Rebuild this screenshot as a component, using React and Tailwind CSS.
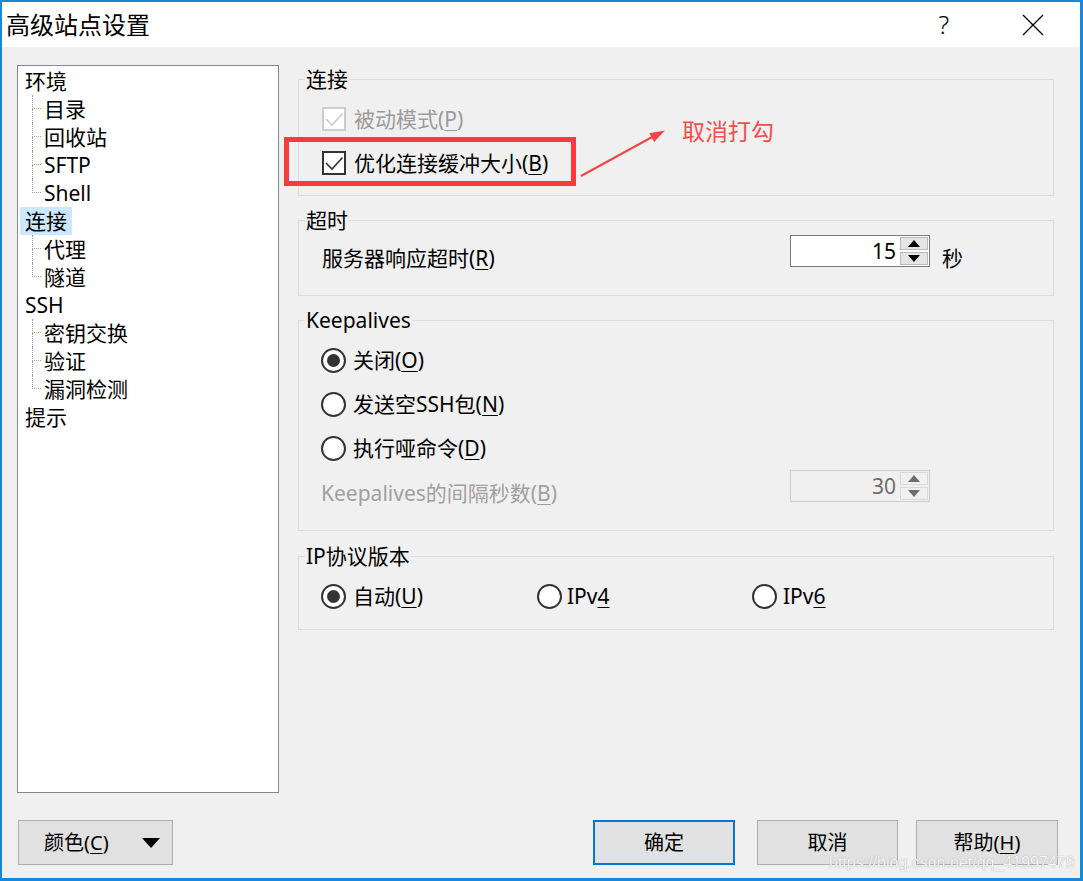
import React from 'react';

const Mn = ({ children }) => (
  <span className="underline underline-offset-[3px] decoration-1">{children}</span>
);

const Checkbox = ({ disabled }) => (
  <span
    className={`w-[24px] h-[24px] border-2 bg-white flex items-center justify-center shrink-0 ${
      disabled ? 'border-[#cccccc]' : 'border-[#333333]'
    }`}
  >
    <svg width="20" height="20" viewBox="0 0 20 20">
      <path
        d="M2 10 L8 16 L18.5 4.5"
        fill="none"
        stroke={disabled ? '#cccccc' : '#333333'}
        strokeWidth="1.6"
      />
    </svg>
  </span>
);

const Radio = ({ checked }) => (
  <span className="w-[25px] h-[25px] rounded-full border-2 border-[#333333] bg-white flex items-center justify-center shrink-0">
    {checked && <span className="w-[13px] h-[13px] rounded-full bg-[#333333]" />}
  </span>
);

const Arrow = ({ up, color }) => (
  <svg width="12" height="7" viewBox="0 0 12 7">
    <path d={up ? 'M0 7 L6 0 L12 7 Z' : 'M0 0 L6 7 L12 0 Z'} fill={color} />
  </svg>
);

const SpinBox = ({ value, disabled }) => (
  <div
    className={`w-[140px] h-[32px] border flex items-center shrink-0 ${
      disabled ? 'border-[#cccccc] bg-[#f0f0f0] text-[#6d6d6d]' : 'border-[#7a7a7a] bg-white text-black'
    }`}
  >
    <span className="flex-1 text-right pr-[4px] text-[21px] leading-[21px]">{value}</span>
    <div className="w-[28px] h-full flex flex-col justify-center gap-[2px] mr-[1px]">
      <div
        className={`h-[13px] border flex items-center justify-center ${
          disabled ? 'border-[#d9d9d9] bg-[#f0f0f0]' : 'border-[#b9b9b9] bg-[#e5e5e5]'
        }`}
      >
        <Arrow up color={disabled ? '#6d6d6d' : '#000'} />
      </div>
      <div
        className={`h-[13px] border flex items-center justify-center ${
          disabled ? 'border-[#d9d9d9] bg-[#f0f0f0]' : 'border-[#b9b9b9] bg-[#e5e5e5]'
        }`}
      >
        <Arrow color={disabled ? '#6d6d6d' : '#000'} />
      </div>
    </div>
  </div>
);

const Group = ({ title, className, children }) => (
  <fieldset className={`border border-[#dcdcdc] ${className}`}>
    <legend className="ml-[6px] px-[1px] h-[20px] leading-[20px] text-[21px] text-black">{title}</legend>
    {children}
  </fieldset>
);

const RootItem = ({ label, selected }) => (
  <div className="h-[28px] flex items-center">
    <span
      className={`ml-[2px] px-[5px] h-full flex items-center ${selected ? 'bg-[#cce8ff]' : ''}`}
    >
      {label}
    </span>
  </div>
);

const ChildItem = ({ label, last }) => (
  <div className="h-[28px] flex items-center">
    <div className="ml-[14px] w-[9px] h-full flex flex-col">
      <div className="h-[14px] border-l border-b border-dotted border-[#a0a0a0]" />
      <div className={`h-[14px] ${last ? '' : 'border-l border-dotted border-[#a0a0a0]'}`} />
    </div>
    <span className="ml-[3px]">{label}</span>
  </div>
);

const Button = ({ children, primary, className }) => (
  <div
    className={`h-[45px] bg-[#e1e1e1] flex items-center justify-center text-[20px] ${
      primary ? 'border-2 border-[#0078d7]' : 'border border-[#adadad]'
    } ${className}`}
  >
    {children}
  </div>
);

export default function App() {
  return (
    <div className="relative w-[1083px] h-[881px] border-t-2 border-l-2 border-r-[3px] border-b-[3px] border-[#1a86d9] bg-[#f0f0f0] flex flex-col text-black leading-none font-['Noto_Sans','Noto_Sans_CJK_SC',sans-serif]">
      {/* Title bar */}
      <div className="h-[45px] bg-white flex items-center shrink-0">
        <span className="ml-[4px] text-[24px]">高级站点设置</span>
        <span className="ml-auto text-[25px] font-light">?</span>
        <svg className="ml-[73px] mr-[36px]" width="22" height="22" viewBox="0 0 22 22">
          <path d="M1 1 L21 21 M21 1 L1 21" stroke="#000" strokeWidth="1.3" />
        </svg>
      </div>

      {/* Body */}
      <div className="flex-1 flex flex-col px-[15px]">
        <div className="flex items-start mt-[18px]">
          {/* Tree */}
          <div className="w-[262px] h-[728px] border border-[#828790] bg-white pt-[1px] text-[21px] shrink-0">
            <RootItem label="环境" />
            <ChildItem label="目录" />
            <ChildItem label="回收站" />
            <ChildItem label="SFTP" />
            <ChildItem label="Shell" last />
            <RootItem label="连接" selected />
            <ChildItem label="代理" />
            <ChildItem label="隧道" last />
            <RootItem label="SSH" />
            <ChildItem label="密钥交换" />
            <ChildItem label="验证" />
            <ChildItem label="漏洞检测" last />
            <RootItem label="提示" />
          </div>

          {/* Settings */}
          <div className="ml-[19px] w-[756px] flex flex-col text-[21px]">
            <Group title="连接" className="mt-[4px]">
              <div className="pl-[23px] pt-[8px] pb-[10px]">
                <div className="h-[44px] flex items-center gap-[8px] text-[#9b9b9b]">
                  <Checkbox disabled />
                  <span>
                    被动模式(<Mn>P</Mn>)
                  </span>
                </div>
                <div className="h-[44px] flex items-center gap-[8px]">
                  <Checkbox />
                  <span>
                    优化连接缓冲大小(<Mn>B</Mn>)
                  </span>
                </div>
              </div>
            </Group>

            <Group title="超时" className="mt-[14px]">
              <div className="pl-[23px] pt-[5px] pb-[26px] flex items-start">
                <span className="w-[468px] mt-[13px]">
                  服务器响应超时(<Mn>R</Mn>)
                </span>
                <SpinBox value="15" />
                <span className="ml-[12px] mt-[13px]">秒</span>
              </div>
            </Group>

            <Group title="Keepalives" className="mt-[14px]">
              <div className="pl-[22px] pt-[8px] pb-[26px]">
                <div className="h-[44px] flex items-center gap-[7px]">
                  <Radio checked />
                  <span>
                    关闭(<Mn>O</Mn>)
                  </span>
                </div>
                <div className="h-[44px] flex items-center gap-[7px]">
                  <Radio />
                  <span>
                    发送空SSH包(<Mn>N</Mn>)
                  </span>
                </div>
                <div className="h-[44px] flex items-center gap-[7px]">
                  <Radio />
                  <span>
                    执行哑命令(<Mn>D</Mn>)
                  </span>
                </div>
                <div className="flex items-start">
                  <span className="w-[469px] mt-[13px] text-[#a0a0a0]">
                    Keepalives的间隔秒数(<Mn>B</Mn>)
                  </span>
                  <SpinBox value="30" disabled />
                </div>
              </div>
            </Group>

            <Group title="IP协议版本" className="mt-[15px]">
              <div className="pl-[22px] pt-[8px] pb-[11px] flex">
                <div className="w-[216px] h-[44px] flex items-center gap-[7px]">
                  <Radio checked />
                  <span>
                    自动(<Mn>U</Mn>)
                  </span>
                </div>
                <div className="w-[215px] h-[44px] flex items-center gap-[5px]">
                  <Radio />
                  <span>
                    IPv<Mn>4</Mn>
                  </span>
                </div>
                <div className="h-[44px] flex items-center gap-[6px]">
                  <Radio />
                  <span>
                    IPv<Mn>6</Mn>
                  </span>
                </div>
              </div>
            </Group>
          </div>
        </div>

        {/* Buttons */}
        <div className="flex items-center mt-[27px]">
          <Button className="ml-[1px] w-[155px] !justify-start">
            <span className="ml-[25px]">
              颜色(<Mn>C</Mn>)
            </span>
            <svg className="ml-[33px]" width="18" height="10" viewBox="0 0 18 10">
              <path d="M0 0 L18 0 L9 10 Z" fill="#000" />
            </svg>
          </Button>
          <Button primary className="ml-[420px] w-[142px]">
            确定
          </Button>
          <Button className="ml-[22px] w-[141px]">取消</Button>
          <Button className="ml-[18px] w-[142px]">
            帮助(<Mn>H</Mn>)
          </Button>
        </div>
      </div>

      {/* Annotation overlay */}
      <svg
        className="absolute left-[-2px] top-[-2px] pointer-events-none"
        width="1083"
        height="881"
        viewBox="0 0 1083 881"
      >
        <rect x="286.5" y="139.5" width="287" height="44" fill="none" stroke="#fc3a3a" strokeWidth="5" />
        <line x1="581" y1="176" x2="654" y2="136" stroke="#f24545" strokeWidth="2" />
        <path d="M665 130.5 L649.3 133.3 L654.1 142.1 Z" fill="#f24545" />
      </svg>
      <span className="absolute left-[680px] top-[118px] text-[23px] leading-[23px] text-[#f44d4d]">取消打勾</span>
      <span className="absolute left-[827px] top-[853px] whitespace-nowrap text-[16px] leading-[16px] font-['Liberation_Sans',sans-serif] text-[#f4f4f4] [text-shadow:0_0_1px_#9a9a9a]">
        https://blog.csdn.net/qq_41997479
      </span>
    </div>
  );
}
